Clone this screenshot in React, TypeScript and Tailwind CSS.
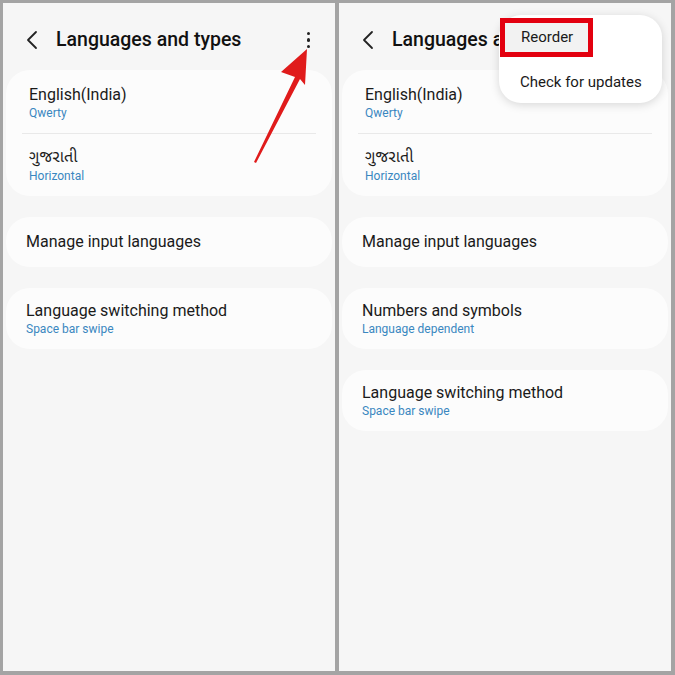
import React from 'react';

// Deux captures côte à côte : écran "Languages and types" avec flèche, puis menu ouvert

type Item = { title: string; sub?: string };

const font = { fontFamily: 'Roboto, "Noto Sans", "Noto Sans Gujarati", sans-serif' };

function Header({ showKebab }: { showKebab: boolean }) {
  return (
    <div className="h-[67px] flex items-center pl-[22px] pr-[25px] pt-[7px]">
      <svg width="14" height="20" viewBox="0 0 14 20" className="mr-[17px]">
        <path d="M11 2 L3 10 L11 18" fill="none" stroke="#222" strokeWidth="1.8" strokeLinecap="round" strokeLinejoin="round" />
      </svg>
      <span className="text-[19.5px] font-medium text-[#111]">Languages and types</span>
      {showKebab && (
        <div className="ml-auto flex flex-col gap-[3px] items-center">
          <span className="w-[3.5px] h-[3.5px] rounded-full bg-[#222]" />
          <span className="w-[3.5px] h-[3.5px] rounded-full bg-[#222]" />
          <span className="w-[3.5px] h-[3.5px] rounded-full bg-[#222]" />
        </div>
      )}
    </div>
  );
}

function Row({ item }: { item: Item }) {
  return (
    <div className={`flex flex-col justify-center px-[20px] ${item.sub ? 'h-[61px]' : 'h-[50px]'}`}>
      <span className="text-[16px] leading-[20px] text-[#1a1a1a]">{item.title}</span>
      {item.sub && <span className="text-[12px] leading-[16px] text-[#3a87c0]">{item.sub}</span>}
    </div>
  );
}

function Card({ children }: { children: React.ReactNode }) {
  return <div className="bg-[#fcfcfc] rounded-[24px] mx-[3px]">{children}</div>;
}

function LanguagesCard() {
  return (
    <Card>
      <div className="h-[63px] flex flex-col justify-center px-[23px] pt-[2px]">
        <span className="text-[16px] leading-[20px] text-[#1a1a1a]">English(India)</span>
        <span className="text-[12px] leading-[16px] text-[#3a87c0]">Qwerty</span>
      </div>
      <div className="mx-[16px] h-px bg-[#e9e9e9]" />
      <div className="h-[62px] flex flex-col justify-center px-[23px]">
        <span className="text-[16px] leading-[22px] text-[#1a1a1a]">ગુજરાતી</span>
        <span className="text-[12px] leading-[16px] text-[#3a87c0]">Horizontal</span>
      </div>
    </Card>
  );
}

function Panel({ items, menu, arrow }: { items: Item[]; menu?: boolean; arrow?: boolean }) {
  return (
    <div className="relative w-[332px] h-[668px] bg-[#f6f6f6] overflow-hidden" style={font}>
      <Header showKebab={!menu} />
      <div className="flex flex-col gap-[21px]">
        <LanguagesCard />
        {items.map((it) => (
          <Card key={it.title}>
            <Row item={it} />
          </Card>
        ))}
      </div>

      {arrow && (
        <svg className="absolute left-0 top-0" width="332" height="668" viewBox="0 0 332 668">
          <polygon
            points="251,159 292,74 278,69 304,46 302,82 297,76 253,160"
            fill="#e01b1b"
          />
        </svg>
      )}

      {menu && (
        <div className="absolute left-[160px] top-[12px] w-[163px] h-[88px] bg-white rounded-[22px] shadow-[0_2px_10px_rgba(0,0,0,0.15)] flex flex-col">
          <div className="ml-[1px] mt-[3px] w-[93px] h-[39px] border-[5px] border-[#e3000f] bg-[#f2f2f2] flex items-center pl-[16px] text-[15px] text-[#1a1a1a]">
            Reorder
          </div>
          <div className="h-[46px] flex items-center pl-[21px] pt-[4px] text-[15px] text-[#1a1a1a]">Check for updates</div>
        </div>
      )}
    </div>
  );
}

export default function App() {
  const left: Item[] = [
    { title: 'Manage input languages' },
    { title: 'Language switching method', sub: 'Space bar swipe' },
  ];
  const right: Item[] = [
    { title: 'Manage input languages' },
    { title: 'Numbers and symbols', sub: 'Language dependent' },
    { title: 'Language switching method', sub: 'Space bar swipe' },
  ];
  return (
    <div className="w-[675px] h-[675px] bg-[#a4a4a4] flex gap-[4px] pl-[3px] pt-[3px]">
      <Panel items={left} arrow />
      <Panel items={right} menu />
    </div>
  );
}
